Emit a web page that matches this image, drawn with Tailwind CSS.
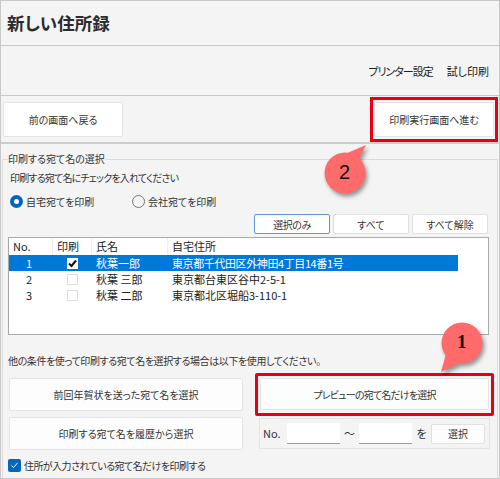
<!DOCTYPE html>
<html lang="ja">
<head>
    <meta charset="UTF-8">
    <title>新しい住所録</title>
    <script src="https://cdn.jsdelivr.net/npm/@tailwindcss/browser@4"></script>
</head>
<body class="bg-[#f4f4f4] font-['Noto_Sans_CJK_JP',sans-serif] [font-feature-settings:'palt'] text-[#333] text-[10px] overflow-hidden">
<div class="relative w-[500px] h-[479px] border border-[#c8c8c8] overflow-hidden">
    <!-- title -->
    <div class="h-[45px] border-b border-[#c8c8c8] pl-[6px] pt-[5px] text-[17.5px] leading-[34px] font-bold text-[#2b2b2b]">新しい住所録</div>

    <!-- print menu -->
    <div class="h-[50px] border-b border-[#c8c8c8] flex justify-end items-center gap-[14px] pr-[10px] pt-[2px] text-[11px] text-[#222]">
        <span class="tracking-[-1px]">プリンター設定</span>
        <span>試し印刷</span>
    </div>

    <!-- nav buttons -->
    <div class="h-[48px] border-b-2 border-[#cdcdcd] flex justify-between items-start pl-[2px] pr-[1px] pt-[1px]">
        <button class="mt-[5px] w-[120px] h-[35px] bg-white border border-[#e4e4e4] rounded-[2px]">前の画面へ戻る</button>
        <div class="w-[128px] h-[45px] border-[3px] border-[#e60012] pt-[2px] px-[1px]">
            <button class="w-full h-[35px] bg-white border border-[#e4e4e4] rounded-[2px]">印刷実行画面へ進む</button>
        </div>
    </div>

    <!-- group box -->
    <div class="relative mx-[1px] mt-[15px] h-[330px] border border-[#dcdcdc] px-[6px]">
        <div class="absolute left-[5px] -top-[8px] bg-[#f4f4f4] leading-[13px]">印刷する宛て名の選択</div>
        <div class="pl-[1px] pt-[11px] leading-[14px] tracking-[-0.8px]">印刷する宛て名にチェックを入れてください</div>

        <div class="flex items-center pl-[1px] mt-[9px] h-[14px]">
            <span class="w-[13px] h-[13px] rounded-full bg-[#0067c0] flex items-center justify-center"><span class="w-[5px] h-[5px] rounded-full bg-white"></span></span>
            <span class="ml-[3px] w-[106px]">自宅宛てを印刷</span>
            <span class="w-[13px] h-[13px] rounded-full border border-[#777] bg-[#f4f4f4]"></span>
            <span class="ml-[3px]">会社宛てを印刷</span>
        </div>

        <div class="flex justify-end gap-[3px] mt-[6px] pr-[3px] h-[20px]">
            <button class="w-[76px] h-[20px] bg-white border border-[#5b9bd5] rounded-[2px] tracking-[-0.5px]">選択のみ</button>
            <button class="w-[76px] h-[20px] bg-white border border-[#e0e0e0] rounded-[2px]">すべて</button>
            <button class="w-[76px] h-[20px] bg-white border border-[#e0e0e0] rounded-[2px]">すべて解除</button>
        </div>

        <!-- list -->
        <div class="mt-[3px] -ml-[1px] w-[481px] h-[98px] border border-[#a8a8a8] bg-white text-[11px] text-[#222]">
            <div class="flex h-[17px] items-center leading-none">
                <span class="w-[44px] pl-[4px] border-r border-[#eee] h-full flex items-center">No.</span>
                <span class="w-[39px] pl-[4px] border-r border-[#eee] h-full flex items-center">印刷</span>
                <span class="w-[76px] pl-[4px] border-r border-[#eee] h-full flex items-center">氏名</span>
                <span class="pl-[4px]">自宅住所</span>
            </div>
            <div class="flex w-[449px] h-[16px] items-center bg-[#0078d7] text-white">
                <span class="w-[44px] text-center pr-[4px]">1</span>
                <span class="w-[39px] flex justify-center">
                    <span class="w-[11px] h-[11px] bg-white flex items-center justify-center">
                        <svg class="w-[11px] h-[11px]" viewBox="0 0 11 11"><path d="M2 5.5 4.5 8 9 2.5" fill="none" stroke="#111" stroke-width="2"/></svg>
                    </span>
                </span>
                <span class="w-[76px] pl-[4px]">秋葉一郎</span>
                <span class="pl-[4px] tracking-[-0.4px]">東京都千代田区外神田4丁目14番1号</span>
            </div>
            <div class="flex h-[16px] items-center">
                <span class="w-[44px] text-center pr-[4px]">2</span>
                <span class="w-[39px] flex justify-center"><span class="w-[11px] h-[11px] bg-white border border-[#ddd]"></span></span>
                <span class="w-[76px] pl-[4px]">秋葉 三郎</span>
                <span class="pl-[4px]">東京都台東区谷中2-5-1</span>
            </div>
            <div class="flex h-[16px] items-center">
                <span class="w-[44px] text-center pr-[4px]">3</span>
                <span class="w-[39px] flex justify-center"><span class="w-[11px] h-[11px] bg-white border border-[#ddd]"></span></span>
                <span class="w-[76px] pl-[4px]">秋葉 二郎</span>
                <span class="pl-[4px]">東京都北区堀船3-110-1</span>
            </div>
        </div>

        <div class="mt-[19px] -ml-[1px] leading-[14px] tracking-[-0.4px]">他の条件を使って印刷する宛て名を選択する場合は以下を使用してください。</div>

        <div class="flex mt-[10px]">
            <div class="w-[234px] shrink-0 flex flex-col gap-[6px]">
                <button class="h-[33px] bg-[#fdfdfd] border border-[#e4e4e4] rounded-[2px]">前回年賀状を送った宛て名を選択</button>
                <button class="h-[33px] bg-[#fdfdfd] border border-[#e4e4e4] rounded-[2px]">印刷する宛て名を履歴から選択</button>
            </div>
            <div class="w-[239px] shrink-0 ml-[12px] -mt-[5px]">
                <div class="h-[43px] border-[3px] border-[#e60012] rounded-[2px] p-[2px]">
                    <button class="w-full h-[32px] bg-[#fdfdfd] border border-[#e4e4e4] rounded-[2px] tracking-[-0.8px]">プレビューの宛て名だけを選択</button>
                </div>
                <div class="mt-[2px] ml-[4px] h-[31px] w-[231px] border border-[#e4e4e4] flex items-center pl-[3px] text-[11px]">
                    <span class="w-[24px]">No.</span>
                    <span class="w-[53px] h-[21px] bg-white border-b border-[#999]"></span>
                    <span class="w-[19px] text-center">～</span>
                    <span class="w-[53px] h-[21px] bg-white border-b border-[#999]"></span>
                    <span class="w-[19px] text-center">を</span>
                    <button class="w-[54px] h-[20px] bg-[#fdfdfd] border border-[#e0e0e0] rounded-[2px] text-[10px]">選択</button>
                </div>
            </div>
        </div>

        <div class="flex items-center mt-[8px] -ml-[1px] h-[14px]">
            <span class="w-[13px] h-[13px] rounded-[2px] bg-[#0067c0] flex items-center justify-center">
                <svg class="w-[11px] h-[11px]" viewBox="0 0 11 11"><path d="M2.5 5.5 4.5 7.5 8.5 3" fill="none" stroke="#fff" stroke-width="1"/></svg>
            </span>
            <span class="ml-[3px] tracking-[-0.55px]">住所が入力されている宛て名だけを印刷する</span>
        </div>
    </div>

    <!-- callouts -->
    <svg class="absolute left-[320px] top-[140px] w-[60px] h-[60px]" viewBox="0 0 60 60" style="filter:drop-shadow(2px 3px 2px rgba(0,0,0,.4))">
        <circle cx="24" cy="32" r="20.5" fill="#ff6b6b"/>
        <path d="M24 13 45 4 38 18z" fill="#ff6b6b"/>
    </svg>
    <span class="absolute left-[338px] top-[157px] text-[20px] leading-[28px] text-[#111] font-['Liberation_Sans',sans-serif]">2</span>
    <svg class="absolute left-[431px] top-[319px] w-[60px] h-[60px]" viewBox="0 0 60 60" style="filter:drop-shadow(2px 3px 2px rgba(0,0,0,.4))">
        <circle cx="30" cy="23" r="20.5" fill="#ff6b6b"/>
        <path d="M14 34 9 52 28 43z" fill="#ff6b6b"/>
    </svg>
    <span class="absolute left-[456px] top-[327px] text-[19px] leading-[28px] text-[#111] font-bold font-['Liberation_Serif',serif]">1</span>
</div>
</body>
</html>
